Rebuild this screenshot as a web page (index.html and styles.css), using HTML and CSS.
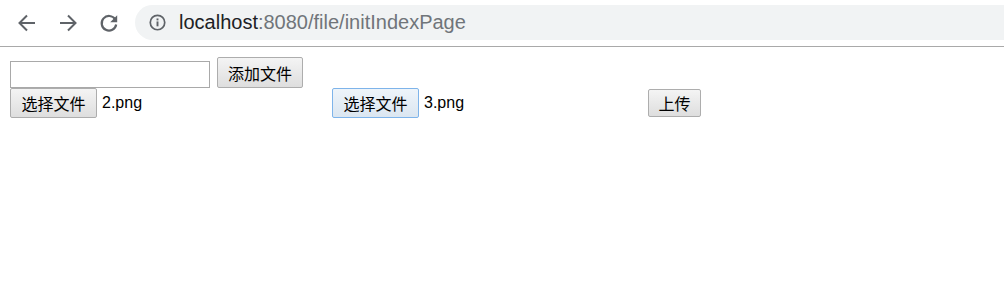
FILE: index.html
```html
<!DOCTYPE html>
<html lang="zh-CN">

<head>
    <meta charset="UTF-8">
    <title>initIndexPage</title>
    <link rel="stylesheet" href="styles.css">
</head>

<body>
    <!-- 浏览器工具栏 -->
    <div class="toolbar">
        <span class="nav-btn">
            <svg width="20" height="20" viewBox="0 0 20 20"><path d="M18 10H3M10 2.5L2.5 10l7.5 7.5" fill="none" stroke="#5f6368" stroke-width="2"/></svg>
        </span>
        <span class="nav-btn">
            <svg width="20" height="20" viewBox="0 0 20 20"><path d="M2 10h15M10 2.5l7.5 7.5-7.5 7.5" fill="none" stroke="#5f6368" stroke-width="2"/></svg>
        </span>
        <span class="nav-btn">
            <svg width="20" height="20" viewBox="0 0 20 20"><path d="M16.2 6.4A7.3 7.3 0 1 0 17.2 11.5" fill="none" stroke="#5f6368" stroke-width="2.2"/><path d="M18.2 2.2v7h-7z" fill="#5f6368"/></svg>
        </span>
        <div class="omnibox">
            <svg class="info" width="17" height="17" viewBox="0 0 16 16"><circle cx="8" cy="8" r="6.8" fill="none" stroke="#5f6368" stroke-width="1.6"/><rect x="7.1" y="7" width="1.8" height="4.6" fill="#5f6368"/><rect x="7.1" y="4.2" width="1.8" height="1.8" fill="#5f6368"/></svg>
            <span class="host">localhost</span><span class="path">:8080/file/initIndexPage</span>
        </div>
    </div>

    <div class="page">
        <div class="row">
            <input type="text" class="name-input">
            <button class="btn add-btn">添加文件</button>
        </div>
        <div class="row">
            <span class="file-field">
                <button class="btn">选择文件</button>
                <span class="file-name">2.png</span>
            </span>
            <span class="file-field">
                <button class="btn btn-focus">选择文件</button>
                <span class="file-name">3.png</span>
            </span>
            <button class="btn upload-btn">上传</button>
        </div>
    </div>
</body>

</html>
```

FILE: styles.css
```css
body {
    margin: 0;
    padding: 0;
    background: #fff;
    font-family: "Liberation Sans", "Noto Sans CJK SC", sans-serif;
}

/* 工具栏 */
.toolbar {
    height: 46px;
    border-bottom: 1px solid #a9a9a9;
    display: flex;
    align-items: center;
    padding-left: 7px;
}

.nav-btn {
    width: 40px;
    height: 36px;
    display: flex;
    align-items: center;
    justify-content: center;
    margin-right: 1px;
}

.omnibox {
    flex: 1;
    height: 35px;
    margin-left: 5px;
    margin-top: -1px;
    background: #f1f3f4;
    border-radius: 18px 0 0 18px;
    display: flex;
    align-items: center;
    padding-left: 14px;
    font-size: 20px;
}

.info {
    margin-right: 13px;
}

.host {
    color: #202124;
}

.path {
    color: #70757a;
}

/* 页面内容 */
.page {
    padding: 10px 10px 0;
}

.row {
    display: flex;
    align-items: flex-end;
}

.name-input {
    box-sizing: border-box;
    width: 200px;
    height: 27px;
    margin: 0 7px 0 0;
    border: 1px solid #a9a9a9;
    padding: 0 3px;
}

.btn {
    box-sizing: border-box;
    height: 30px;
    padding: 0 7px;
    margin: 0;
    border: 1px solid #adadad;
    border-radius: 2px;
    background: linear-gradient(#f4f4f4, #dedede);
    font-family: "Noto Sans CJK SC", sans-serif;
    font-size: 16px;
    color: #000;
    line-height: 1;
}

.add-btn {
    width: 86px;
    height: 31px;
}

.btn-focus {
    border-color: #7eb4ea;
    background: linear-gradient(#eef4fa, #dbe6f1);
}

.file-field {
    width: 322px;
    display: flex;
    align-items: center;
}

.file-field .btn {
    width: 87px;
}

.file-name {
    margin-left: 5px;
    font-size: 16px;
    color: #000;
}

.file-field + .file-field {
    width: 316px;
}

.upload-btn {
    width: 53px;
    height: 28px;
    padding: 0;
    margin-bottom: 1px;
}
```
